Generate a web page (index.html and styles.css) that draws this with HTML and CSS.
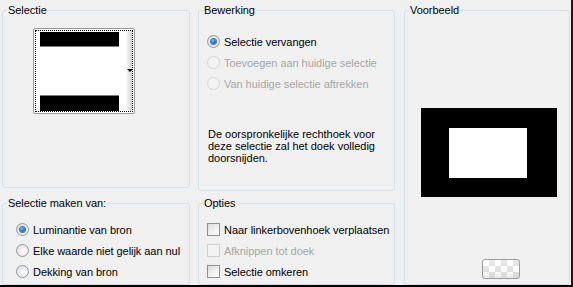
FILE: index.html
```html
<!DOCTYPE html>
<html>
<head>
<meta charset="utf-8">
<link rel="stylesheet" href="styles.css">
</head>
<body>
<div class="window">
  <fieldset class="group g-sel">
    <legend>Selectie</legend>
    <div class="combo">
      <div class="focus">
        <div class="swatch">
          <div class="bar top"></div>
          <div class="bar bottom"></div>
        </div>
        <div class="strip"><span class="arrow"></span></div>
      </div>
    </div>
  </fieldset>

  <fieldset class="group g-bew">
    <legend>Bewerking</legend>
    <div class="opts">
      <label class="opt"><span class="radio on"></span>Selectie vervangen</label>
      <label class="opt dis"><span class="radio"></span>Toevoegen aan huidige selectie</label>
      <label class="opt dis"><span class="radio"></span>Van huidige selectie aftrekken</label>
    </div>
    <p class="note">De oorspronkelijke rechthoek voor<br>deze selectie zal het doek volledig<br>doorsnijden.</p>
  </fieldset>

  <fieldset class="group g-voor">
    <legend>Voorbeeld</legend>
    <div class="preview"><div class="inner"></div></div>
    <div class="checkbtn"></div>
  </fieldset>

  <fieldset class="group g-maken">
    <legend>Selectie maken van:</legend>
    <div class="opts low">
      <label class="opt"><span class="radio on"></span>Luminantie van bron</label>
      <label class="opt"><span class="radio"></span>Elke waarde niet gelijk aan nul</label>
      <label class="opt"><span class="radio"></span>Dekking van bron</label>
    </div>
  </fieldset>

  <fieldset class="group g-opt">
    <legend>Opties</legend>
    <div class="opts low">
      <label class="opt"><span class="check"></span>Naar linkerbovenhoek verplaatsen</label>
      <label class="opt dis"><span class="check"></span>Afknippen tot doek</label>
      <label class="opt"><span class="check"></span>Selectie omkeren</label>
    </div>
  </fieldset>
</div>
</body>
</html>
```

FILE: styles.css
```css
html, body {
  margin: 0;
  padding: 0;
  background: #f0f0f0;
}
body {
  width: 573px;
  height: 287px;
  overflow: hidden;
  font-family: "Liberation Sans", Arial, sans-serif;
  font-size: 11px;
  color: #000;
}
.window {
  box-sizing: border-box;
  width: 573px;
  height: 287px;
  padding: 3px 0 0 2px;
  border-bottom: 2px solid #000;
  border-right: 2px solid #1a1a1a;
  background: #f0f0f0;
  overflow: hidden;
  display: grid;
  grid-template-columns: 188px 197px 167px;
  grid-template-rows: 188px 89px;
  column-gap: 8px;
  row-gap: 5px;
}
.group {
  margin: 0;
  padding: 0;
  min-width: 0;
  border: 1px solid #d5dfe5;
  border-radius: 3px;
}
.group legend {
  margin-left: 4px;
  padding: 0 1px;
  line-height: 14px;
  height: 14px;
  white-space: nowrap;
  letter-spacing: -0.05px;
}
.g-sel {
  grid-column: 1;
  grid-row: 1;
  align-self: start;
  height: 185px;
  box-sizing: border-box;
}
.g-bew {
  grid-column: 2;
  grid-row: 1;
}
.g-voor {
  grid-column: 3;
  grid-row: 1 / 3;
  margin-left: 1px;
  display: flex;
  flex-direction: column;
  align-items: flex-start;
}
.g-maken {
  grid-column: 1;
  grid-row: 2;
}
.g-opt {
  grid-column: 2;
  grid-row: 2;
}

/* combo */
.combo {
  margin: 11px 0 0 30px;
  width: 98px;
  height: 82px;
  border: 1px solid #9a9a9a;
  border-radius: 2px;
  background: #fff;
  padding: 1px;
}
.focus {
  box-sizing: border-box;
  height: 100%;
  border: 1px dotted #000;
  display: flex;
}
.swatch {
  margin: 1px 0 0 4px;
  width: 79px;
  display: flex;
  flex-direction: column;
  justify-content: space-between;
}
.bar {
  background: #000;
}
.bar.top {
  height: 14px;
  border-bottom: 1px solid #7a7a7a;
}
.bar.bottom {
  height: 15px;
  border-top: 1px solid #7a7a7a;
}
.strip {
  margin-left: auto;
  width: 6px;
  background: linear-gradient(to right, #fbfbfb, #cfcfcf);
  display: flex;
  flex-direction: column;
  justify-content: center;
  align-items: center;
}
.arrow {
  width: 0;
  height: 0;
  border-left: 3px solid transparent;
  border-right: 3px solid transparent;
  border-top: 3px solid #000;
  margin-top: -2px;
  margin-left: 1px;
}

/* options */
.opts {
  padding: 14px 0 0 8px;
}
.opts.low {
  padding-top: 9px;
}
.g-maken .opts {
  padding-left: 13px;
}
.opt {
  display: flex;
  align-items: center;
  gap: 4px;
  height: 21px;
  white-space: nowrap;
  letter-spacing: -0.05px;
}
.opt.dis {
  color: #a6a6a6;
}
.radio {
  box-sizing: border-box;
  width: 13px;
  height: 13px;
  border-radius: 50%;
  border: 1px solid #8d9aa3;
  background: radial-gradient(circle at 60% 60%, #ffffff 0%, #e9e9e9 55%, #cfcfcf 100%);
  display: flex;
  align-items: center;
  justify-content: center;
  flex: none;
}
.radio.on::after {
  content: "";
  width: 5px;
  height: 5px;
  border-radius: 50%;
  background: radial-gradient(circle at 40% 35%, #7ec1ff 0%, #1e6fd0 55%, #0b3f8c 100%);
  box-shadow: 0 0 0 1px #3a7fc8;
}
.opt.dis .radio {
  border-color: #d2d6d9;
  background: #f3f3f3;
}
.check {
  box-sizing: border-box;
  width: 13px;
  height: 13px;
  border: 1px solid #8e8f8f;
  background: linear-gradient(135deg, #dcdcdc, #f6f6f6 70%, #ffffff);
  flex: none;
}
.opt.dis .check {
  border-color: #cfcfcf;
  background: #f3f3f3;
}
.note {
  margin: 34px 0 0 9px;
  line-height: 12px;
  white-space: nowrap;
}

/* preview */
.preview {
  margin: 91px 0 0 16px;
  width: 136px;
  height: 89px;
  background: #000;
  padding: 20px 0 0 28px;
  box-sizing: border-box;
}
.preview .inner {
  width: 78px;
  height: 50px;
  background: #fff;
}
.checkbtn {
  margin: 62px 0 0 77px;
  width: 36px;
  height: 18px;
  border: 1px solid #9c9c9c;
  border-radius: 3px;
  background:
    linear-gradient(to bottom, rgba(255,255,255,0.2), rgba(255,255,255,0) 50%, rgba(200,200,200,0.4)),
    conic-gradient(#e2e2e2 25%, #ffffff 0 50%, #e2e2e2 0 75%, #ffffff 0) 0 0 / 12px 12px;
}
```
